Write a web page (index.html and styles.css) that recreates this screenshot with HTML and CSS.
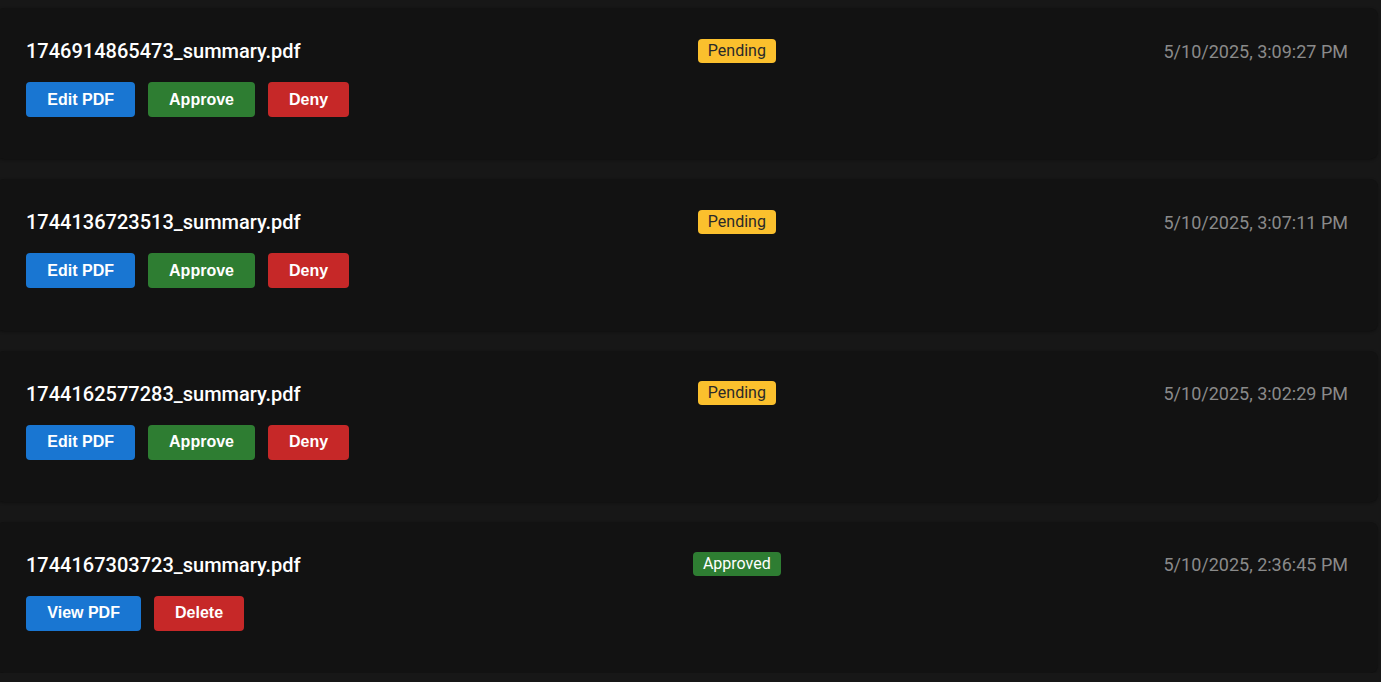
FILE: index.html
```html
<!DOCTYPE html>
<html lang="en">
<head>
<meta charset="utf-8">
<title>Submissions</title>
<link rel="stylesheet" href="styles.css">
</head>
<body>
<div class="list">
  <div class="card">
    <div class="card-head">
      <h3 class="file">1746914865473_summary.pdf</h3>
      <span class="badge badge-pending">Pending</span>
      <span class="date">5/10/2025, 3:09:27 PM</span>
    </div>
    <div class="actions">
      <button class="btn btn-blue">Edit PDF</button>
      <button class="btn btn-green">Approve</button>
      <button class="btn btn-red">Deny</button>
    </div>
  </div>
  <div class="card">
    <div class="card-head">
      <h3 class="file">1744136723513_summary.pdf</h3>
      <span class="badge badge-pending">Pending</span>
      <span class="date">5/10/2025, 3:07:11 PM</span>
    </div>
    <div class="actions">
      <button class="btn btn-blue">Edit PDF</button>
      <button class="btn btn-green">Approve</button>
      <button class="btn btn-red">Deny</button>
    </div>
  </div>
  <div class="card">
    <div class="card-head">
      <h3 class="file">1744162577283_summary.pdf</h3>
      <span class="badge badge-pending">Pending</span>
      <span class="date">5/10/2025, 3:02:29 PM</span>
    </div>
    <div class="actions">
      <button class="btn btn-blue">Edit PDF</button>
      <button class="btn btn-green">Approve</button>
      <button class="btn btn-red">Deny</button>
    </div>
  </div>
  <div class="card">
    <div class="card-head">
      <h3 class="file">1744167303723_summary.pdf</h3>
      <span class="badge badge-approved">Approved</span>
      <span class="date">5/10/2025, 2:36:45 PM</span>
    </div>
    <div class="actions">
      <button class="btn btn-blue">View PDF</button>
      <button class="btn btn-red">Delete</button>
    </div>
  </div>
</div>
</body>
</html>
```

FILE: styles.css
```css
* { box-sizing: border-box; }
html, body { margin: 0; padding: 0; }
body {
  background: #171717;
  font-family: Roboto, "Liberation Sans", Arial, sans-serif;
  color: #fff;
  overflow: hidden;
}
.list {
  display: flex;
  flex-direction: column;
  gap: 20px;
  padding-top: 8px;
  margin-left: -4px;
  margin-right: 3px;
}
.card {
  background: #121212;
  border-radius: 8px;
  padding: 30px 30px 42.33px 30px;
  box-shadow: 0 1px 3px rgba(0, 0, 0, 0.35);
}
.card-head {
  display: grid;
  grid-template-columns: 6fr 2fr 5fr;
  align-items: center;
  height: 24px;
}
.file {
  margin: 0;
  padding-top: 1px;
  font-size: 20px;
  font-weight: 500;
  color: #fff;
  white-space: nowrap;
}
.badge {
  justify-self: center;
  margin-right: 2px;
  height: 24px;
  line-height: 24px;
  padding: 0 10px;
  border-radius: 4px;
  font-size: 16px;
}
.badge-pending { background: #fbc02d; color: #2a2a2a; }
.badge-approved { background: #2e7d32; color: #fff; }
.date {
  justify-self: end;
  padding-top: 1px;
  font-size: 18px;
  color: #8a8a8a;
  white-space: nowrap;
}
.actions {
  display: flex;
  gap: 12.5px;
  margin-top: 20px;
}
.btn {
  height: 35px;
  padding: 0 21.3px;
  border: none;
  border-radius: 4px;
  font-family: "Liberation Sans", Arial, sans-serif;
  font-weight: bold;
  font-size: 16px;
  color: #fff;
  cursor: pointer;
}
.btn-blue { background: #1976d2; }
.btn-green { background: #2e7d32; }
.btn-red { background: #c62828; }
```
